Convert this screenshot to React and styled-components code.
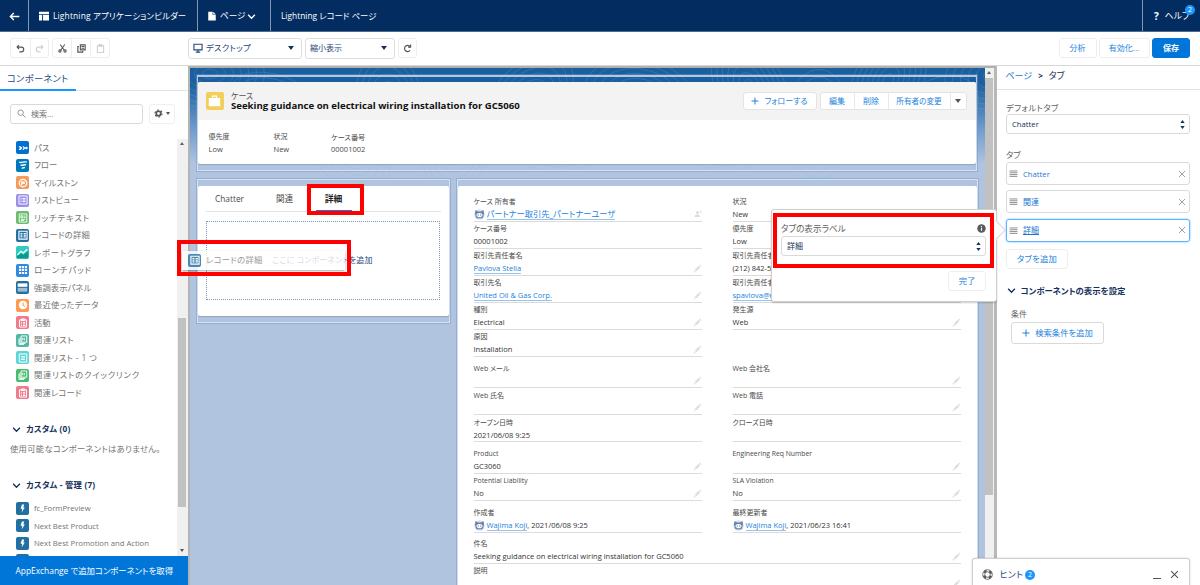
import React from "react";
import styled, { createGlobalStyle, css } from "styled-components";

const Global = createGlobalStyle`
  * { box-sizing: border-box; }
  html, body { margin: 0; padding: 0; overflow: hidden; }
  body {
    width: 1200px; height: 585px; background: #fff; color: #3e3e3c;
    font-family: "Open Sans", "Noto Sans CJK JP", sans-serif;
    font-feature-settings: "palt"; font-size: 8px; line-height: 12px; white-space: nowrap;
  }
`;

const T = styled.span`
  font-size: ${(p) => p.$s || 8}px;
  color: ${(p) => p.$c || "inherit"};
  font-weight: ${(p) => (p.$b ? 700 : 400)};
  letter-spacing: ${(p) => p.$ls || 0}px;
  line-height: 12px;
  white-space: pre;
`;

const Shell = styled.div`
  position: relative; width: 1200px; height: 585px; overflow: hidden;
  display: flex; flex-direction: column;
`;
const Spacer = styled.div`flex: 1;`;

/* ---------- global header ---------- */
const Header = styled.header`
  height: 31.5px; flex: none; background: #032d60; color: #fff; display: flex;
  border-bottom: 1px solid #4d6c91;
`;
const HeaderCell = styled.div`
  width: ${(p) => p.$w || "auto"}; flex: ${(p) => (p.$grow ? 1 : "none")};
  display: flex; align-items: center; padding: 2px 0 0 ${(p) => p.$pl || 10}px;
  border-right: ${(p) => (p.$last ? 0 : "1px solid #8296b0")};
`;
const HeaderLabel = styled(T)`margin: 0 ${(p) => p.$mr || 0}px 0 ${(p) => p.$ml || 0}px;`;
const Badge = styled.span`
  width: 10px; height: 10px; border-radius: 50%; background: #1b96ff; color: #fff;
  font-size: 7px; line-height: 10px; text-align: center; flex: none;
`;
const HelpBadge = styled(Badge)`position: absolute; left: 1185px; top: 5px;`;

/* ---------- toolbar ---------- */
const Toolbar = styled.div`
  height: 34px; flex: none; display: flex; align-items: center; padding: 0 10px;
  border-bottom: 1px solid #d8d8d8; background: #fff;
`;
const Group = styled.div`
  display: flex; height: 20px; border: 1px solid #eee; border-radius: 3px; margin-right: ${(p) => p.$mr || 0}px;
`;
const ToolCell = styled.div`
  width: ${(p) => p.$w || 19}px; display: flex; align-items: center; justify-content: center;
  & + & { border-left: 1px solid #eee; }
`;
const ToolRight = styled.div`display: flex; align-items: center; flex: none; width: 1002px; margin-left: auto;`;
const Picker = styled.div`
  width: ${(p) => p.$w}px; height: 21px; border: 1px solid #dedede; border-radius: 3px; margin-right: 3px;
  display: flex; align-items: center; padding: 0 7px 0 4px; gap: 3px; color: #27477a;
`;
const Btn = styled.div`
  height: ${(p) => p.$h || 20}px; width: ${(p) => p.$w}px; border-radius: 3px; display: flex; align-items: center; justify-content: center;
  gap: 5px; color: #1b83dc; border: 1px solid ${(p) => p.$bc || "#eeeeee"}; background: #fff; flex: none;
  margin-left: ${(p) => p.$ml || 0}px;
  ${(p) => p.$primary && css`background: #0176d9; border-color: #0176d9; color: #fff;`}
`;
const Caret = styled.i`
  border: ${(p) => p.$z || 4}px solid transparent; border-top: ${(p) => (p.$z || 4) + 1}px solid ${(p) => p.$c || "#16325c"};
  border-bottom: 0; width: 0; height: 0; flex: none;
`;

/* ---------- component palette ---------- */
const Body = styled.div`flex: 1; min-height: 0; display: flex;`;
const Left = styled.aside`width: 187.5px; flex: none; display: flex; flex-direction: column; background: #fff;`;
const PanelTabs = styled.div`height: 25px; flex: none; border-bottom: 1px solid #e2e2e2; display: flex;`;
const PanelTab = styled.div`
  width: 76px; height: 25px; padding: 7px 0 0 7px; border-bottom: 2px solid #1b96ff; color: #27477a;
`;
const SearchRow = styled.div`height: 48.5px; flex: none; display: flex; padding: 13px 0 0 10px; gap: 6px;`;
const SearchBox = styled.div`
  width: 133px; height: 20px; border: 1px solid #dadada; border-radius: 3px; display: flex; align-items: center; padding-left: 6px; gap: 5px;
`;
const GearBtn = styled.div`
  width: 26px; height: 20px; border: 1px solid #f0f0f0; border-radius: 3px; display: flex; align-items: center; justify-content: center; gap: 3px;
`;
const Palette = styled.div`flex: 1; min-height: 0; display: flex;`;
const List = styled.div`flex: 1; min-height: 0; overflow: hidden;`;
const Item = styled.div`
  height: 17.5px; display: flex; align-items: center; padding-left: 16px; gap: 5px; color: #747474;
`;
const Section = styled.div`
  height: 14px; display: flex; align-items: center; gap: 5px; padding-left: 12px; color: #16325c; margin-top: ${(p) => p.$mt}px;
`;
const Empty = styled.div`padding: 7px 0 0 10px; color: #747474; height: 22px;`;
const CustomList = styled.div`padding-top: 7.5px;`;
const Track = styled.div`
  width: ${(p) => p.$w}px; background: #f0f0f0; flex: none; display: flex; flex-direction: column; align-items: center;
  justify-content: space-between; padding: 3px 0 4px;
`;
const Thumb = styled.div`width: 8px; height: ${(p) => p.$h}px; background: #c1c1c1; margin-top: ${(p) => p.$mt}px;`;
const Up = styled.i`border: 2.5px solid transparent; border-bottom: 3px solid #606060; border-top: 0; width: 0;`;
const Down = styled.i`border: 2.5px solid transparent; border-top: 3px solid #505050; border-bottom: 0; width: 0;`;
const TrackTop = styled.div`display: flex; flex-direction: column; align-items: center;`;
const Exchange = styled.div`
  height: 29px; flex: none; background: #0176d9; color: #fff; display: flex; align-items: center; padding-left: 15.5px;
`;

/* ---------- canvas ---------- */
const Frame = styled.main`
  width: 809px; flex: none; border-left: 2.5px solid #b4b4b4; border-top: 2.5px solid #b0b0b0; border-right: 3px solid #b8b8b8;
  display: flex; position: relative;
`;
const Canvas = styled.div`
  flex: 1; position: relative; overflow: hidden; padding: 7px 7px 0;
  background: linear-gradient(#1b5f9f 0, #1b5f9f 16px, #6f9acb 60px, #b0c4df 96px);
`;
const Topo = styled.svg`position: absolute; left: 0; top: 0; opacity: 0.25;`;
const Slot = styled.div`
  position: relative; flex: none; border: 1px solid rgba(225, 236, 248, 0.75); outline: 1px solid rgba(120, 150, 195, 0.45);
  padding: ${(p) => p.$top || 5}px 0 0; height: ${(p) => p.$h}px; width: ${(p) => p.$w}px;
  border-top-width: ${(p) => p.$bt || 2}px;
`;
const Card = styled.div`
  background: #fff; border-radius: 2px; box-shadow: 0 1px 1px rgba(70, 90, 130, 0.3); overflow: hidden;
  height: ${(p) => p.$h}px; display: flex; flex-direction: column;
`;
const Highlights = styled.div`height: 38px; flex: none; background: #f3f3f3; display: flex; align-items: center; padding: 0 9px 0 8px;`;
const CaseIcon = styled.div`
  width: 18px; height: 18px; border-radius: 2px; background: #f2cf5b; margin-right: 7px; display: flex; align-items: center; justify-content: center;
`;
const TitleBox = styled.div`display: flex; flex-direction: column; padding-left: 0.5px; span { line-height: 10px; }`;
const Actions = styled.div`
  margin-left: ${(p) => p.$ml}px; height: 18px; display: flex; background: #fff; border: 1px solid #e4e4e4; border-radius: 3px; color: #1b83dc;
`;
const Action = styled.div`
  width: ${(p) => p.$w}px; display: flex; align-items: center; justify-content: center; gap: 5px;
  & + & { border-left: 1px solid #e8e8e8; }
`;
const Facts = styled.div`display: flex; padding: 11px 0 0 11px;`;
const Fact = styled.div`width: ${(p) => p.$w}px; display: flex; flex-direction: column; color: #4a4a4a;`;
const Columns = styled.div`display: flex; gap: 7px; margin-top: 8px; align-items: flex-start;`;

const TabBar = styled.div`
  margin: 0 8px; height: 26px; flex: none; border-bottom: 1px solid #e2e2e2; display: flex; align-items: stretch; color: #555;
`;
const TabItem = styled.div`
  margin-left: ${(p) => p.$ml}px; width: ${(p) => p.$w}px; padding-top: 7.5px; text-align: center;
  border-bottom: ${(p) => (p.$on ? "1.5px solid #1b6fe0" : "0")}; color: ${(p) => (p.$on ? "#222" : "#4a4a4a")};
`;
const Drop = styled.div`
  margin: 9px 9px 0 8px; height: 79px; border: 1px dotted #7d95b8; display: flex; align-items: center; justify-content: center; color: #27477a;
`;
const Ghost = styled.div`
  position: absolute; left: 182px; top: 251px; width: 163px; height: 18.5px; z-index: 4; background: rgba(255, 255, 255, 0.8);
  box-shadow: 0 1px 2px rgba(0, 0, 0, 0.35); display: flex; align-items: center; padding-left: 6px; gap: 5px; color: #999;
`;
const Mark = styled.div`
  position: absolute; z-index: 6; border: 4px solid #ff0000; left: ${(p) => p.$x}px; top: ${(p) => p.$y}px;
  width: ${(p) => p.$w}px; height: ${(p) => p.$h}px;
`;

const Fields = styled.div`padding: 9px 16px 0 16px;`;
const FieldRow = styled.div`display: flex; gap: 31px; padding-top: ${(p) => p.$gap || 0}px;`;
const Field = styled.div`
  flex: 1; height: 27.1px; border-bottom: 1px solid #dddbda; padding-top: 1.5px; display: flex; flex-direction: column;
`;
const Value = styled.div`display: flex; align-items: center; height: 12px; color: #333; > svg:first-child { margin-right: 2px; }`;
const Link = styled.span`
  color: #1b83dc; line-height: 10px; border-bottom: 1px solid #93c5ee; font-size: ${(p) => p.$s || 8}px;
`;

/* ---------- properties ---------- */
const Right = styled.aside`flex: 1; min-width: 0; background: #fff;`;
const Crumb = styled.div`height: 24px; border-bottom: 1px solid #e2e2e2; padding: 4px 0 0 9px; display: flex; gap: 6px; color: #16325c;`;
const Props = styled.div`padding: 12.5px 10px 0 9.5px; display: flex; flex-direction: column; color: #5f5f5f;`;
const Select = styled.div`
  height: 20px; border: 1px solid #dadada; border-radius: 3px; display: flex; align-items: center; justify-content: space-between;
  padding: 0 4px 0 5px; color: #16325c; background: #fff; margin-bottom: ${(p) => p.$mb || 0}px;
`;
const TabRow = styled.div`
  height: 23px; margin-bottom: 5.3px; border: 1px solid ${(p) => (p.$on ? "#5eb4ff" : "#dadada")}; border-radius: 3px;
  box-shadow: ${(p) => (p.$on ? "0 0 2px #5eb4ff" : "none")}; color: #1b77ce;
  display: flex; align-items: center; padding: 0 3px 0 2px; gap: 5px; text-decoration: ${(p) => (p.$on ? "underline" : "none")};
`;
const TabRows = styled.div`padding-top: 1px;`;
const AddTab = styled.div`padding-top: 2px;`;
const VisTitle = styled.div`display: flex; align-items: center; gap: 4.5px; color: #16325c; margin: 16px 0 11px 1px;`;
const Vis = styled.div`padding-left: 5px; display: flex; flex-direction: column; gap: 2px;`;

const Popover = styled.div`
  position: absolute; z-index: 5; left: 771px; top: 209px; width: 226px; height: 93px; background: #fff;
  border: 1px solid #cfcfcf; border-radius: 3px; box-shadow: 0 1px 2px rgba(0, 0, 0, 0.2); padding: 11.5px 10px 0 9px;
  display: flex; flex-direction: column;
  &::after {
    content: ""; position: absolute; right: -7px; top: 13px; width: 13px; height: 13px; background: #fff;
    border: 1px solid #d8d8d8; border-left: 0; border-bottom: 0; transform: rotate(45deg);
  }
`;
const PopLabel = styled.div`display: flex; justify-content: space-between; align-items: center; height: 14px; color: #5f5f5f; margin-bottom: 0.5px;`;
const PopFoot = styled.div`display: flex; justify-content: flex-end; margin-top: 15px;`;
const Hint = styled.div`
  position: absolute; z-index: 5; left: 971.5px; top: 558px; width: 218.5px; height: 30px; background: #fff; border: 1px solid #cfcfcf;
  border-radius: 3px; box-shadow: 0 0 2px rgba(0, 0, 0, 0.2); display: flex; align-items: center; padding: 3px 10px 0 9px; color: #27477a;
`;
const HintLabel = styled(T)`margin: 0 2px 0 7px;`;
const MinBar = styled.i`width: 8px; height: 1.5px; background: #555; margin: 8px 9px 0 0;`;

/* ---------- icons ---------- */
const Svg = ({ w = 10, h, vb = "0 0 16 16", c = "currentColor", fill, sw = 2, children }) => (
  <svg width={w} height={h || w} viewBox={vb} fill={fill ? c : "none"} stroke={fill ? "none" : c} strokeWidth={sw}>
    {children}
  </svg>
);
const Chevron = ({ w = 9, c = "#16325c" }) => <Svg w={w} c={c} sw={2.4}><path d="M2 5l6 6 6-6" /></Svg>;
const Sort = () => <Svg w={5} h={11} vb="0 0 5 11" fill c="#16325c"><path d="M2.5 1L4.7 4H.3zM2.5 10L4.7 7H.3z" /></Svg>;
const Pencil = () => <Svg w={9} fill c="#dedede"><path d="M1 15l1-4 3 3zM3 10l7-7 3 3-7 7zM11 2l1.500-1.200 3 3L14 5z" /></Svg>;
const UserSwap = () => <Svg w={8} fill c="#dcdcdc"><circle cx="7" cy="5" r="3" /><path d="M1 14c0-4 3-5 6-5s5 1 5 5zM11 2h4v5h-1.500V3.500H11z" /></Svg>;
const Plus = () => <Svg w={8} sw={2}><path d="M8 1v14M1 8h14" /></Svg>;
const Cross = ({ w = 8, c = "#a0a0a0" }) => <Svg w={w} c={c} sw={2}><path d="M2 2l12 12M14 2L2 14" /></Svg>;
const Grip = () => <Svg w={9} c="#8a8a8a" sw={1.7}><path d="M1 3.500h14M1 6.700h14M1 9.900h14M1 13.100h14" /></Svg>;
const Avatar = () => (
  <Svg w={11} vb="0 0 22 22" fill>
    <circle cx="11" cy="11" r="10.500" fill="#d5e0ec" />
    <path d="M3 2l5 3h6l5-3 1 7-2 8-4 3H8l-4-3-2-8z" fill="#6683ab" />
    <ellipse cx="11" cy="12" rx="6" ry="4" fill="#fff" />
    <circle cx="8.500" cy="12" r="1.200" fill="#2f5078" /><circle cx="13.500" cy="12" r="1.200" fill="#2f5078" />
    <path d="M7 17.500h8v2H7z" fill="#cfdcea" />
  </Svg>
);

const Tile = styled.span`
  width: 13px; height: 13px; border-radius: 2px; background: ${(p) => p.$bg}; flex: none; display: flex; align-items: center; justify-content: center;
`;
const GLYPHS = {
  path: <Svg w={10} fill c="#fff"><path d="M1 5h3l3 3-3 3H1l2-3zM7 5h2l3 3-3 3H7l2-3z" /><circle cx="13.500" cy="8" r="2" /></Svg>,
  flow: <Svg w={10} c="#fff" sw={2.2}><path d="M2 3.500c4 2 8-2 12 0M4 8c3 1.500 6-1.500 9 0M6 12.500c2 1 3-1 5 0" /></Svg>,
  mile: <Svg w={10} c="#fff" sw={2}><circle cx="8" cy="8" r="6" /><path d="M6 5.500h5v4H6z" fill="#fff" stroke="none" /><path d="M6 5v6.500" /></Svg>,
  list: <Svg w={10} c="#fff" sw={1.5}><path d="M1.500 1.500h13v13h-13z" /><path d="M4 5.500h1.500M7 5.500h5M4 8h1.500M7 8h5M4 10.500h1.500M7 10.500h5" /></Svg>,
  rich: <Svg w={10} c="#fff" sw={1.4}><path d="M2 1.500h12v13H2z" /><path d="M4.500 4.500h3v3h-3zM9 5h3M9 7.500h3M4.500 10h7M4.500 12h5" /></Svg>,
  detail: <Svg w={10} c="#fff" sw={1.8}><path d="M1.500 2h13v12.500h-13z" /><path d="M4 5.500h3M9 5.500h3.500M4 8.200h3M9 8.200h3.500M4 11h3M9 11h3.500" /></Svg>,
  one: <Svg w={10} c="#fff" sw={1.6}><path d="M2 1.500h12v13H2z" /><path d="M5 5.500h6M5 8h6M5 10.500h6" /></Svg>,
  chart: <Svg w={13} c="#fff" sw={1.6}><path d="M2 11l4-4.500 3 2L14 4" /><path d="M1 15V13l5-4 3 2 6-4.500V15z" fill="#0a9a90" stroke="none" /></Svg>,
  grid: <Svg w={10} fill c="#fff"><path d="M1.500 1.500h3.500v3.500H1.500zM6.200 1.500h3.500v3.500H6.200zM11 1.500h3.500v3.500H11zM1.500 6.200h3.500v3.500H1.500zM6.200 6.200h3.500v3.500H6.200zM11 6.200h3.500v3.500H11zM1.500 11h3.500v3.500H1.500zM6.200 11h3.500v3.500H6.200zM11 11h3.500v3.500H11z" /></Svg>,
  panel: <Svg w={11} fill c="#fff"><path d="M1 2h14v5H1z" /><path d="M1 8.500h14V14H1z" opacity=".55" /></Svg>,
  clock: <Svg w={10} fill c="#fff"><circle cx="8" cy="8" r="6.800" /><path d="M8 4v4.500l3 2" stroke="#fe9339" strokeWidth="1.600" fill="none" /></Svg>,
  task: <Svg w={10} c="#fff" sw={1.6}><path d="M2.500 3h11v11.500h-11zM5.500 1.500h5v2.500h-5z" /><path d="M5 7h1.500M8 7h3.500M5 9.500h1.500M8 9.500h3.500M5 12h1.500M8 12h3.500" /></Svg>,
  stack: <Svg w={10} c="#fff" sw={1.5}><path d="M5 11.500H14V1.500H5zM3.200 4v9.500h8.500M1.500 6v9h8" /><path d="M7.500 4.500v4M10 4.500v4" /></Svg>,
  bolt: <Svg w={9} fill c="#fff"><path d="M7 1h4L9.500 6H12L6.500 15l1-6.500H4.500z" /></Svg>,
};
/* label, tile colour, glyph, letter spacing */
const ITEMS = [
  ["パス", "#0070d2", "path", 0.2], ["フロー", "#0079bc", "flow", 0], ["マイルストン", "#f59a5c", "mile", 0], ["リストビュー", "#9a8fe8", "list", 0.3],
  ["リッチテキスト", "#6bbd6e", "rich", 0.9], ["レコードの詳細", "#236fa1", "detail", 0.2], ["レポートグラフ", "#2ecbbe", "chart", 0.8],
  ["ローンチパッド", "#2f8ade", "grid", 0.9], ["強調表示パネル", "#236fa1", "panel", 0.1], ["最近使ったデータ", "#fe9b50", "clock", 0.25],
  ["活動", "#ef7b8d", "task", 0], ["関連リスト", "#4fb7a3", "stack", 0.6], ["関連リスト - 1 つ", "#5bd6d6", "one", 0.4],
  ["関連リストのクイックリンク", "#45bd6c", "stack", 0.8], ["関連レコード", "#ef7b8d", "task", 0.2],
];
const CUSTOM = ["fc_FormPreview", "Next Best Product", "Next Best Promotion and Action", ""];

const FIELDS = [
  { l: ["ケース 所有者", "パートナー取引先_パートナーユーザ", "owner"], r: ["状況", "New", "edit"] },
  { l: ["ケース番号", "00001002"], r: ["優先度", "Low", "edit"] },
  { l: ["取引先責任者名", "Pavlova Stella", "linkedit"], r: ["取引先責任者 電話", "(212) 842-5500"] },
  { l: ["取引先名", "United Oil & Gas Corp.", "linkedit"], r: ["取引先責任者 メール", "spavlova@uog.com", "link"] },
  { l: ["種別", "Electrical", "edit"], r: ["発生源", "Web", "edit"] },
  { l: ["原因", "Installation", "edit"], r: null },
  { gap: 4, l: ["Web メール", "", "edit"], r: ["Web 会社名", "", "edit"] },
  { l: ["Web 氏名", "", "edit"], r: ["Web 電話", "", "edit"] },
  { l: ["オープン日時", "2021/06/08 9:25"], r: ["クローズ日時", ""] },
  { gap: 4.5, l: ["Product", "GC3060", "edit"], r: ["Engineering Req Number", "", "edit"] },
  { l: ["Potential Liability", "No", "edit"], r: ["SLA Violation", "No", "edit"] },
  { gap: 4.5, l: ["作成者", "2021/06/08 9:25", "user"], r: ["最終更新者", "2021/06/23 16:41", "user"] },
  { gap: 4, l: ["件名", "Seeking guidance on electrical wiring installation for GC5060", "edit"] },
  { l: ["説明", "", "edit"] },
];

function FieldCell({ data }) {
  if (!data) return <Spacer />;
  const [label, value, kind = ""] = data;
  return (
    <Field>
      <T $s={/^[A-Z][a-zA-Z ]+$/.test(label) ? 6.8 : 7} $c="#4a4a4a">{label}</T>
      <Value>
        {(kind === "owner" || kind === "user") && <Avatar />}
        {kind === "owner" && <Link $s={8.25}>{value}</Link>}
        {kind.startsWith("link") && <Link $s={7.5}>{value}</Link>}
        {kind === "user" && <><Link $s={7.5}>Wajima Koji</Link><T $s={7.5}>, {value}</T></>}
        {(kind === "" || kind === "edit") && <T $s={7.5}>{value}</T>}
        <Spacer />
        {kind.endsWith("edit") && <Pencil />}
        {kind === "owner" && <UserSwap />}
      </Value>
    </Field>
  );
}

function Topography() {
  const rings = [];
  for (let i = 0; i < 14; i++) {
    const cx = 20 + i * 60 + (i % 3) * 9;
    const cy = 6 + ((i * 37) % 80);
    for (let r = 6; r < 44; r += 6) rings.push(<ellipse key={`${i}-${r}`} cx={cx} cy={cy} rx={r * 1.3} ry={r * 0.8} transform={`rotate(${i * 27} ${cx} ${cy})`} />);
  }
  return <Topo width="796" height="112" fill="none" stroke="#8fb6dd" strokeWidth="0.8">{rings}</Topo>;
}

export default function App() {
  return (
    <Shell>
      <Global />
      <Header>
        <HeaderCell $w="29px" $pl={9}><Svg w={11} c="#fff" sw={2}><path d="M15 8H2M7 3L2 8l5 5" /></Svg></HeaderCell>
        <HeaderCell $w="169px" $pl={10}>
          <Svg w={10} fill c="#fff"><path d="M0 1h16v4H0zM0 6.500h5V15H0zM6.500 6.500H16V15H6.500z" /></Svg>
          <HeaderLabel $s={8.4} $ml={4} $ls={0.18}>Lightning アプリケーションビルダー</HeaderLabel>
        </HeaderCell>
        <HeaderCell $w="73px" $pl={9}>
          <Svg w={10} fill c="#fff"><path d="M2 1h7v5h5v9H2zM10 1l4 4h-4z" /></Svg>
          <HeaderLabel $s={8.6} $ml={3} $mr={2}>ページ</HeaderLabel><Chevron w={9} c="#fff" />
        </HeaderCell>
        <HeaderCell $grow $pl={10}><T $s={8.4}>Lightning レコード ページ</T></HeaderCell>
        <HeaderCell $w="57px" $last $pl={11}><T $s={10} $b>?</T><HeaderLabel $s={8.8} $ml={6}>ヘルプ</HeaderLabel></HeaderCell>
      </Header>
      <HelpBadge>2</HelpBadge>

      <Toolbar>
        <Group $mr={3}>
          <ToolCell><Svg w={9} c="#555" sw={2}><path d="M5 2L2 5.500 5.500 9M2 5.500h7.500a4 4 0 010 8.500H6" /></Svg></ToolCell>
          <ToolCell $w={18}><Svg w={9} c="#d0d0d0" sw={2}><path d="M11 2l3 3.500L10.500 9M14 5.500H6.500a4 4 0 000 8.500H10" /></Svg></ToolCell>
        </Group>
        <Group>
          <ToolCell $w={18}><Svg w={9} c="#555" sw={1.9}><path d="M4 1l7 10M12 1L5 11" /><circle cx="3.500" cy="12.500" r="2" /><circle cx="12.500" cy="12.500" r="2" /></Svg></ToolCell>
          <ToolCell><Svg w={9} c="#555" sw={2}><path d="M6 1.500h8.500v9H6zM3.500 4.500H1.500v10h8.500V12.500M8 4.500h4.500M8 7.500h4.500" /></Svg></ToolCell>
          <ToolCell><Svg w={9} c="#d0d0d0" sw={2}><path d="M2.500 3h11v12h-11zM5.500 1h5v3h-5z" /></Svg></ToolCell>
        </Group>
        <ToolRight>
          <Picker $w={114}><Svg w={10} c="#27477a" sw={1.8}><path d="M1.500 2h13v9h-13zM8 11v3.500M4.500 14.500h7" /></Svg><T $s={8.4} $ls={0.2}>デスクトップ</T><Spacer /><Caret $z={3.5} /></Picker>
          <Picker $w={90}><T>縮小表示</T><Spacer /><Caret $z={3.5} /></Picker>
          <Btn $w={19}><Svg w={9} c="#555" sw={2}><path d="M12.500 11.500a5.500 5.500 0 110-7M13.500 1v4.500H9" /></Svg></Btn>
          <Spacer />
          <Btn $w={38}><T>分析</T></Btn>
          <Btn $w={51} $ml={2}><T>有効化...</T></Btn>
          <Btn $w={38} $ml={2.5} $primary><T $b>保存</T></Btn>
        </ToolRight>
      </Toolbar>

      <Body>
        <Left>
          <PanelTabs><PanelTab><T $s={9.3} $ls={0.3}>コンポーネント</T></PanelTab></PanelTabs>
          <SearchRow>
            <SearchBox><Svg w={9} c="#8a8a8a" sw={1.6}><circle cx="6.500" cy="6.500" r="4.800" /><path d="M10 10l5 5" /></Svg><T $c="#747474">検索...</T></SearchBox>
            <GearBtn>
              <Svg w={9} c="#555" sw={3}><circle cx="8" cy="8" r="4" /><circle cx="8" cy="8" r="6.300" strokeWidth="2" strokeDasharray="3.300 3.300" /></Svg>
              <Caret $z={2} $c="#555" />
            </GearBtn>
          </SearchRow>
          <Palette>
            <List>
              {ITEMS.map(([name, bg, g, ls]) => <Item key={name}><Tile $bg={bg}>{GLYPHS[g]}</Tile><T $s={8.3} $ls={ls}>{name}</T></Item>)}
              <Section $mt={20.5}><Chevron /><T $s={8.3} $ls={0.15} $b>カスタム (0)</T></Section>
              <Empty><T $s={8.3} $ls={0.3}>使用可能なコンポーネントはありません。</T></Empty>
              <Section $mt={20}><Chevron /><T $s={8.3} $ls={0.2} $b>カスタム - 管理 (7)</T></Section>
              <CustomList>{CUSTOM.map((n) => <Item key={n}><Tile $bg="#236fa1">{GLYPHS.bolt}</Tile><T $s={7.7}>{n}</T></Item>)}</CustomList>
            </List>
            <Track $w={10.5}><TrackTop><Up /><Thumb $h={189} $mt={173} /></TrackTop><Down /></Track>
          </Palette>
          <Exchange><T $s={8.4}>AppExchange で追加コンポーネントを取得</T></Exchange>
        </Left>

        <Frame>
          <Canvas>
            <Topography />
            <Slot $h={96} $w={780} $top={5}>
              <Card $h={82}>
                <Highlights>
                  <CaseIcon><Svg w={13} fill c="#fff"><path d="M1 5h14v10H1z" /><path d="M5.500 5V2.500h5V5" fill="none" stroke="#fff" strokeWidth="1.500" /></Svg></CaseIcon>
                  <TitleBox><T $s={8} $c="#555">ケース</T><T $s={9.6} $b $c="#111">Seeking guidance on electrical wiring installation for GC5060</T></TitleBox>
                  <Spacer />
                  <Actions><Action $w={72}><Plus /><T>フォローする</T></Action></Actions>
                  <Actions $ml={3}>
                    <Action $w={33}><T>編集</T></Action><Action $w={34}><T>削除</T></Action>
                    <Action $w={62}><T $s={7.6}>所有者の変更</T></Action><Action $w={16}><Caret $z={3.5} $c="#555" /></Action>
                  </Actions>
                </Highlights>
                <Facts>
                  <Fact $w={65}><T $s={7}>優先度</T><T $s={7.5}>Low</T></Fact>
                  <Fact $w={57.5}><T $s={7}>状況</T><T $s={7.5}>New</T></Fact>
                  <Fact $w={90}><T $s={7.2}>ケース番号</T><T $s={7.5}>00001002</T></Fact>
                </Facts>
              </Card>
            </Slot>
            <Columns>
              <Slot $h={144} $w={253} $top={6} $bt={1}>
                <Card $h={130}>
                  <TabBar>
                    <TabItem $ml={0} $w={48}><T $s={8.3}>Chatter</T></TabItem>
                    <TabItem $ml={12} $w={38}><T $s={8.6}>関連</T></TabItem>
                    <TabItem $ml={12} $w={36} $on><T $s={8.8} $b>詳細</T></TabItem>
                  </TabBar>
                  <Drop><T $s={8} $ls={0.15}>ここに コンポーネントを追加</T></Drop>
                </Card>
              </Slot>
              <Slot $h={420} $w={521} $top={6} $bt={1}>
                <Card $h={420}>
                  <Fields>
                    {FIELDS.map((f, i) => (
                      <FieldRow key={i} $gap={f.gap}>
                        <FieldCell data={f.l} />
                        {"r" in f && <FieldCell data={f.r} />}
                      </FieldRow>
                    ))}
                  </Fields>
                </Card>
              </Slot>
            </Columns>
          </Canvas>
          <Track $w={9}><TrackTop><Up /><Thumb $h={417} $mt={4} /></TrackTop></Track>
        </Frame>

        <Right>
          <Crumb><T $s={9} $c="#1b77ce">ページ</T><T $s={8} $b>&gt;</T><T $s={9}>タブ</T></Crumb>
          <Props>
            <T $s={8.3} $ls={0.4}>デフォルトタブ</T>
            <Select $mb={15}><T $s={7.7}>Chatter</T><Sort /></Select>
            <T $s={8.4}>タブ</T>
            <TabRows>
              <TabRow><Grip /><T $s={7.7}>Chatter</T><Spacer /><Cross /></TabRow>
              <TabRow><Grip /><T>関連</T><Spacer /><Cross /></TabRow>
              <TabRow $on><Grip /><T>詳細</T><Spacer /><Cross /></TabRow>
            </TabRows>
            <AddTab><Btn $w={62}><T $s={8.3} $ls={0.3}>タブを追加</T></Btn></AddTab>
            <VisTitle><Chevron /><T $s={8.4} $b>コンポーネントの表示を設定</T></VisTitle>
            <Vis><T>条件</T><Btn $w={93} $h={22} $bc="#dadada"><Plus /><T $s={8.3}>検索条件を追加</T></Btn></Vis>
          </Props>
        </Right>
      </Body>

      <Ghost><Tile $bg="#4b89b0">{GLYPHS.detail}</Tile><T $s={8.3} $ls={0.3}>レコードの詳細</T></Ghost>
      <Popover>
        <PopLabel>
          <T $s={8.6}>タブの表示ラベル</T>
          <Svg w={9} fill c="#5a5a5a"><circle cx="8" cy="8" r="7.500" /><path d="M7 7h2v5H7zM7 3.700h2v2H7z" fill="#fff" /></Svg>
        </PopLabel>
        <Select><T>詳細</T><Sort /></Select>
        <PopFoot><Btn $w={38}><T $s={8.3}>完了</T></Btn></PopFoot>
      </Popover>
      <Mark $x={307} $y={184} $w={57} $h={31} />
      <Mark $x={177} $y={240} $w={174} $h={35.5} />
      <Mark $x={773} $y={213} $w={221} $h={55} />
      <Hint>
        <Svg w={11} c="#555" sw={1.2}><circle cx="8" cy="8" r="5.500" strokeWidth="3" strokeDasharray="4.320 4.320" strokeDashoffset="-2.100" /><circle cx="8" cy="8" r="7" /><circle cx="8" cy="8" r="4" /></Svg>
        <HintLabel $s={9} $ls={0.2}>ヒント</HintLabel><Badge>2</Badge>
        <Spacer />
        <MinBar /><Cross w={9} c="#555" />
      </Hint>
    </Shell>
  );
}
